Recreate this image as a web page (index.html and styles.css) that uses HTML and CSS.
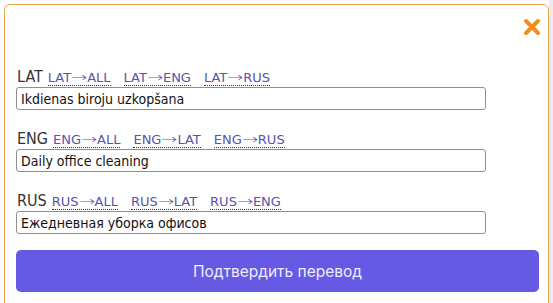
FILE: index.html
```html
<!DOCTYPE html>
<html lang="ru">
<head>
<meta charset="utf-8">
<title>Перевод</title>
<link rel="stylesheet" href="styles.css">
</head>
<body>
<div class="modal">
  <div class="modal-head">
    <button class="close" aria-label="Закрыть">
      <svg width="18" height="18" viewBox="0 0 18 18"><path d="M3 3 L15 15 M15 3 L3 15" stroke="#f28c1c" stroke-width="4" stroke-linecap="round" fill="none"/></svg>
    </button>
  </div>
  <div class="field">
    <div class="label-row"><span class="lang">LAT</span><a class="tr">LAT<span class="arr">→</span>ALL</a><a class="tr">LAT<span class="arr">→</span>ENG</a><a class="tr">LAT<span class="arr">→</span>RUS</a></div>
    <input class="inp" type="text" value="Ikdienas biroju uzkopšana">
  </div>
  <div class="field">
    <div class="label-row"><span class="lang">ENG</span><a class="tr">ENG<span class="arr">→</span>ALL</a><a class="tr">ENG<span class="arr">→</span>LAT</a><a class="tr">ENG<span class="arr">→</span>RUS</a></div>
    <input class="inp" type="text" value="Daily office cleaning">
  </div>
  <div class="field">
    <div class="label-row"><span class="lang">RUS</span><a class="tr">RUS<span class="arr">→</span>ALL</a><a class="tr">RUS<span class="arr">→</span>LAT</a><a class="tr">RUS<span class="arr">→</span>ENG</a></div>
    <input class="inp" type="text" value="Ежедневная уборка офисов">
  </div>
  <button class="confirm">Подтвердить перевод</button>
</div>
</body>
</html>
```

FILE: styles.css
```css
html, body {
  margin: 0;
  padding: 0;
}
body {
  background: linear-gradient(to right, #ffffff 549px, #ececec 549px);
  font-family: "DejaVu Sans Condensed", "DejaVu Sans", sans-serif;
  height: 303px;
  overflow: hidden;
}
.modal {
  margin: 4px 0 0 4px;
  width: 545px;
  box-sizing: border-box;
  border: 1px solid #e6a451;
  border-radius: 6px;
  background: #fff;
  padding: 0 9px 20px 11px;
}
.modal-head {
  height: 62px;
  display: flex;
  justify-content: flex-end;
  align-items: flex-start;
}
.close {
  margin-top: 13px;
  margin-right: -2px;
  padding: 0;
  border: 0;
  background: none;
  width: 18px;
  height: 18px;
  display: flex;
}
.field {
  margin-bottom: 19px;
}
.field:last-of-type {
  margin-bottom: 16px;
}
.label-row {
  height: 20px;
  line-height: 20px;
  white-space: nowrap;
}
.lang {
  font-size: 16px;
  color: #333;
  margin-left: 1px;
  margin-right: 5px;
}
.tr {
  font-family: "DejaVu Sans", sans-serif;
  font-size: 13px;
  color: #5a52ad;
  border-bottom: 1px dotted #333;
  margin-right: 13px;
}
.arr {
  display: inline-block;
  width: 16px;
  text-align: center;
  font-weight: 200;
  transform: scaleX(1.5);
}
.inp {
  display: block;
  width: 470px;
  height: 23px;
  box-sizing: border-box;
  border: 1px solid #8f8f8f;
  border-radius: 3px;
  padding: 0 4px;
  font-family: "DejaVu Sans Condensed", "DejaVu Sans", sans-serif;
  font-size: 14px;
  color: #111;
  background: #fff;
  margin: 0;
}
.confirm {
  display: block;
  width: 523px;
  height: 42px;
  border: 0;
  border-radius: 5px;
  background: #665ae4;
  color: #eeecff;
  font-family: "Inter", sans-serif;
  font-size: 15.5px;
  padding: 0;
}
```
